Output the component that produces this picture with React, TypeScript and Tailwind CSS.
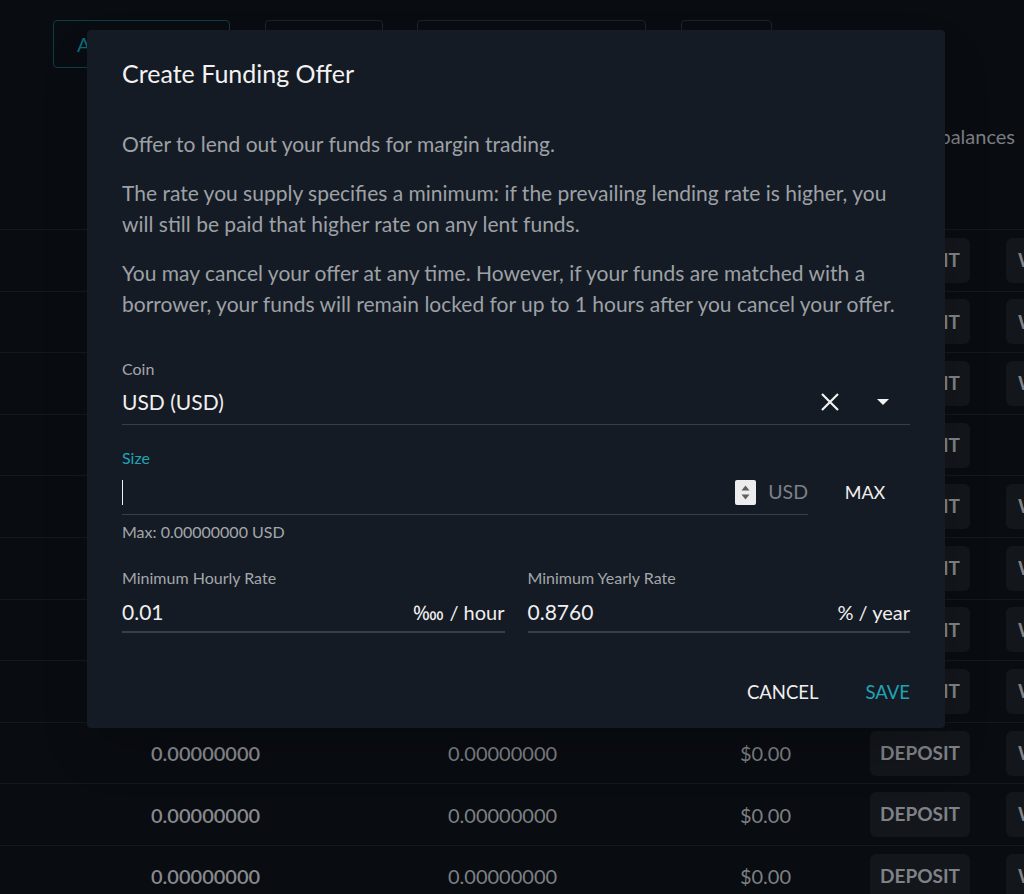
import React from "react";

const rows = Array.from({ length: 11 }, (_, i) => ({
  id: i,
  balance: "0.00000000",
  available: "0.00000000",
  value: "$0.00",
  canWithdraw: i !== 3,
}));

const Spinner = () => (
  <span className="flex h-[25px] w-[21px] items-center justify-center rounded-[2px] bg-[#ededed]">
    <svg width="11" height="17" viewBox="0 0 11 17">
      <path d="M1.5 6.5 L5.5 1.5 L9.5 6.5 Z" fill="#5f5f5f" />
      <path d="M1.5 10.5 L5.5 15.5 L9.5 10.5 Z" fill="#5f5f5f" />
    </svg>
  </span>
);

const FundingOfferDialog = () => (
  <div className="absolute left-[87px] top-[30px] w-[858px] rounded-[4px] bg-[#151b24] px-[35px] pt-[28px] pb-[21px] shadow-2xl">
    <h2 className="text-[25px] leading-[30px] text-[#f2f2f2]">Create Funding Offer</h2>

    {/* Descripción */}
    <div className="mt-[40px] flex flex-col gap-[18px] text-[21px] leading-[31px] text-[#9da1a6]">
      <p>Offer to lend out your funds for margin trading.</p>
      <p>
        The rate you supply specifies a minimum: if the prevailing lending rate is higher, you
        will still be paid that higher rate on any lent funds.
      </p>
      <p>
        You may cancel your offer at any time. However, if your funds are matched with a
        borrower, your funds will remain locked for up to 1 hours after you cancel your offer.
      </p>
    </div>

    {/* Coin */}
    <div className="mt-[40px]">
      <div className="text-[16px] leading-[20px] text-[#a3a7ab]">Coin</div>
      <div className="mt-[6px] flex h-[40px] items-center border-b border-[#3a3f47] pb-[6px]">
        <span className="flex-1 text-[21px] text-[#efefef]">USD (USD)</span>
        <svg width="20" height="20" viewBox="0 0 20 20" className="mr-[37px]">
          <path d="M2 2 L18 18 M18 2 L2 18" stroke="#f2f2f2" strokeWidth="2.2" />
        </svg>
        <svg width="12" height="6" viewBox="0 0 12 6" className="mr-[21px]">
          <path d="M0 0 L12 0 L6 6 Z" fill="#f2f2f2" />
        </svg>
      </div>
    </div>

    {/* Size */}
    <div className="mt-[23px]">
      <div className="text-[16px] leading-[20px] text-[#1fa4b6]">Size</div>
      <div className="mt-[2px] flex items-center gap-[12px]">
        <div className="flex h-[45px] flex-1 items-center border-b border-[#3a3f47]">
          <span className="h-[25px] w-px bg-[#f2f2f2]" />
          <span className="flex-1" />
          <Spinner />
          <span className="ml-[12px] text-[19.5px] text-[#7d8187]">USD</span>
        </div>
        <button className="w-[90px] text-center text-[18px] text-[#efefef]">MAX</button>
      </div>
      <div className="mt-[7px] text-[16px] leading-[20px] text-[#a3a7ab]">Max: 0.00000000 USD</div>
    </div>

    {/* Tasas */}
    <div className="mt-[26px] grid grid-cols-2 gap-[23px]">
      <div>
        <div className="text-[16px] leading-[20px] text-[#a3a7ab]">Minimum Hourly Rate</div>
        <div className="mt-[5px] flex h-[40px] items-center border-b-2 border-[#3a3f47]">
          <span className="flex-1 text-[21px] text-[#efefef]">0.01</span>
          <span className="text-[20px] text-[#efefef]">‱ / hour</span>
        </div>
      </div>
      <div>
        <div className="text-[16px] leading-[20px] text-[#a3a7ab]">Minimum Yearly Rate</div>
        <div className="mt-[5px] flex h-[40px] items-center border-b-2 border-[#3a3f47]">
          <span className="flex-1 text-[21px] text-[#efefef]">0.8760</span>
          <span className="text-[20px] text-[#efefef]">% / year</span>
        </div>
      </div>
    </div>

    {/* Acciones */}
    <div className="mt-[44px] flex justify-end gap-[47px] text-[18.5px] leading-[30px]">
      <button className="text-[#efefef]">CANCEL</button>
      <button className="text-[#1fa4b6]">SAVE</button>
    </div>
  </div>
);

export default function App() {
  return (
    <div
      className="relative h-[894px] w-full overflow-hidden bg-[#090c11]"
      style={{ fontFamily: "Lato, 'Open Sans', sans-serif" }}
    >
      {/* Filtros superiores */}
      <div className="flex pl-[53px] pt-[20px]">
        <button className="h-[48px] w-[177px] rounded-[4px] border border-[#0e3d44] pl-[23px] text-left text-[20px] text-[#0e6b77]">
          All Balances
        </button>
        <button className="ml-[35px] h-[48px] w-[118px] rounded-[4px] border border-[#1f2228] text-[20px] text-[#3a3d42]">
          Exchange
        </button>
        <button className="ml-[34px] h-[48px] w-[229px] rounded-[4px] border border-[#1f2228] text-[20px] text-[#3a3d42]">
          Margin
        </button>
        <button className="ml-[35px] h-[48px] w-[91px] rounded-[4px] border border-[#1f2228] text-[20px] text-[#3a3d42]">
          Funding
        </button>
      </div>

      <div className="mt-[48px] flex h-[40px] items-center justify-end pr-[9px] text-[20px] text-[#7b7e83]">
        Hide zero balances
      </div>

      <div className="h-[73px]" />

      {/* Tabla */}
      <div>
        {rows.map((row) => (
          <div
            key={row.id}
            className="flex h-[61.6px] items-center border-t border-[#15181d] text-[20px]"
          >
            <span className="ml-[151px] w-[297px] shrink-0 font-semibold text-[#87898d]">{row.balance}</span>
            <span className="w-[230px] shrink-0 text-[#7d8084]">{row.available}</span>
            <span className="w-[113px] shrink-0 text-right text-[#7d8084]">{row.value}</span>
            <span className="ml-[79px] flex h-[45px] w-[100px] shrink-0 items-center justify-center rounded-[6px] bg-[#13161b] text-[19px] font-bold text-[#7f8286]">
              DEPOSIT
            </span>
            {row.canWithdraw && (
              <span className="ml-[36px] flex h-[45px] w-[130px] shrink-0 items-center justify-start rounded-[6px] bg-[#13161b] pl-[12px] text-[19px] font-bold text-[#7f8286]">
                WITHDRAW
              </span>
            )}
          </div>
        ))}
      </div>

      <FundingOfferDialog />
    </div>
  );
}
